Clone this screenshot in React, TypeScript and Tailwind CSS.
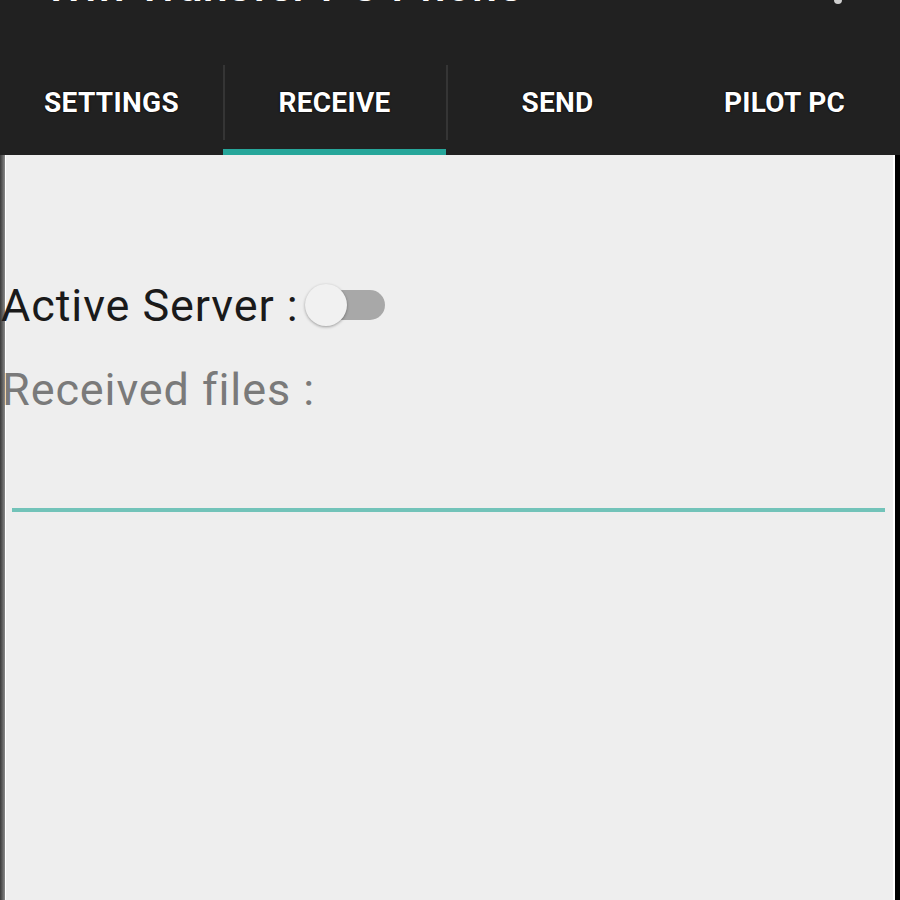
import React from 'react'

const tabs = [
  { id: 'settings', label: 'SETTINGS' },
  { id: 'receive', label: 'RECEIVE' },
  { id: 'send', label: 'SEND' },
  { id: 'pilot', label: 'PILOT PC' },
]

export default function App() {
  const active = 'receive'

  return (
    <div className="w-[900px] h-[900px] flex flex-col overflow-hidden bg-black font-['Roboto',sans-serif]">
      {/* Action bar (title scrolled out of view) */}
      <header className="bg-[#212121] h-[155px] flex flex-col shrink-0">
        <div className="h-[55px] relative overflow-hidden">
          <h1 className="absolute left-[45px] top-[-37px] text-[45px] font-medium text-white leading-none whitespace-nowrap tracking-[0.5px]">
            Wifi Transfer PC Phone
          </h1>
          <span className="absolute left-[834px] top-[-4px] w-[8px] h-[8px] rounded-full bg-[#cfcfcf]" />
        </div>

        {/* Tabs */}
        <nav className="flex flex-1">
          {tabs.map((tab, i) => (
            <div key={tab.id} className={`flex flex-col relative ${i < 3 ? 'w-[223px]' : 'flex-1'}`}>
              {i > 0 && i < 3 && (
                <span className="absolute left-0 top-[10px] h-[75px] w-[2px] bg-[#353535]" />
              )}
              <div className="flex-1 flex items-center justify-center pt-[2px]">
                <span className="text-white font-bold text-[28px] tracking-[0.3px] [text-shadow:0_0_2px_#000,0_0_1px_#000]">
                  {tab.label}
                </span>
              </div>
              <div className={`h-[6px] ${tab.id === active ? 'bg-[#26a69a]' : ''}`} />
            </div>
          ))}
        </nav>
      </header>

      {/* Receive page */}
      <main className="flex-1 flex">
        <div className="w-[5px] bg-gradient-to-r from-[#3a3a3a] to-[#8a8a8a]" />
        <div className="w-[1px] bg-white" />
        <div className="flex-1 bg-[#eeeeee] flex flex-col pt-[124px]">
          <div className="flex items-center -ml-[5px] h-[52px]">
            <span className="text-[45px] leading-none text-[#1a1a1a] tracking-[0.9px]">Active Server :</span>
            {/* switch, off */}
            <div className="relative ml-[6px] w-[82px] h-[44px] flex items-center">
              <div className="absolute left-[22px] w-[58px] h-[30px] rounded-full bg-[#a8a8a8]" />
              <div className="absolute left-[0px] w-[42px] h-[42px] rounded-full bg-[#f1f1f1] shadow-[0_1px_3px_rgba(0,0,0,0.35)]" />
            </div>
          </div>
          <p className="-ml-[4px] mt-[36px] text-[45px] leading-none text-[#7a7a7a] tracking-[0.9px]">Received files :</p>
          <div className="mt-[96px] ml-[6px] mr-[8px] h-[4px] bg-[#72c3b9]" />
        </div>
        <div className="w-[2px] bg-white" />
        <div className="w-[5px] bg-black" />
      </main>
    </div>
  )
}
